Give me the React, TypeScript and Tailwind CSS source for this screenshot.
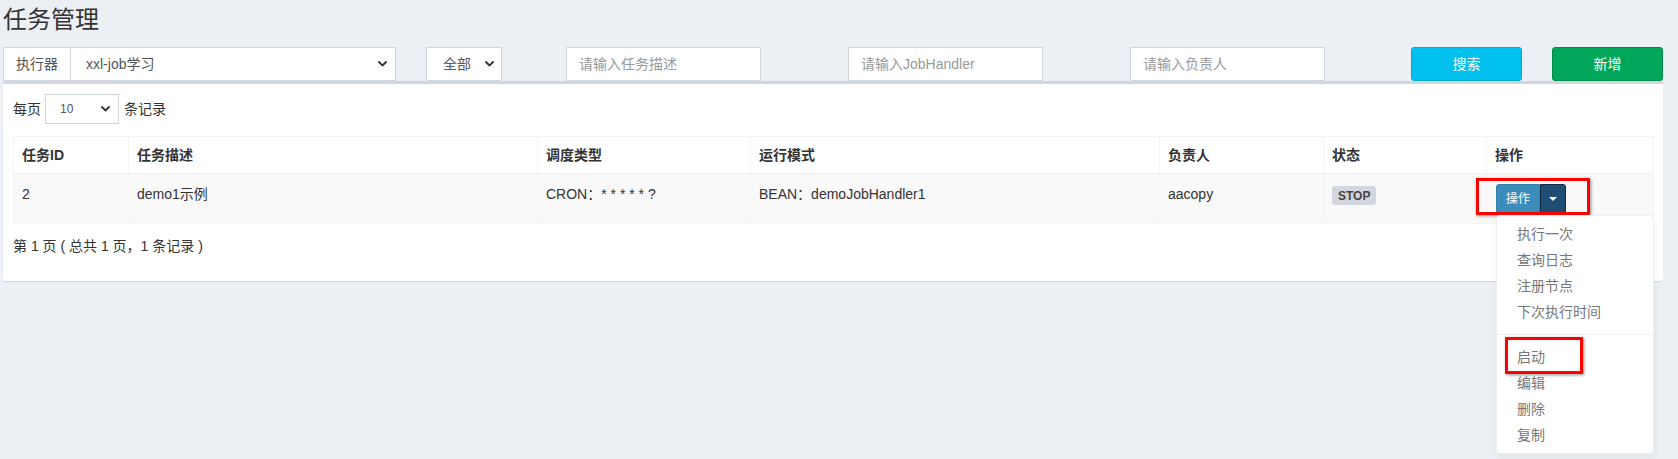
import React from "react";

const FONT = { fontFamily: '"Liberation Sans", "Noto Sans CJK SC", Arial, sans-serif' };

function Chevron({ className = "" }: { className?: string }) {
  return (
    <svg className={className} width="9" height="6" viewBox="0 0 9 6" fill="none">
      <path d="M1 1l3.5 3.5L8 1" stroke="#333" strokeWidth="1.8" strokeLinecap="round" strokeLinejoin="round" />
    </svg>
  );
}

const menuTop = ["执行一次", "查询日志", "注册节点", "下次执行时间"];
const menuBottom = ["启动", "编辑", "删除", "复制"];

const td = "border border-[#f4f4f4] px-[8px] py-[9px] align-top leading-[20px]";

export default function App() {
  return (
    <div className="w-[1678px] h-[459px] bg-[#ecf0f5] overflow-hidden text-[#333] text-[14px]" style={FONT}>
      <div className="pl-[3px] pt-[7px] w-[1663px]">
        <h1 className="text-[24px] leading-[26px] font-normal text-[#333]">任务管理</h1>

        {/* filter row */}
        <div className="mt-[14px] flex items-start h-[34px]">
          <div className="flex h-[34px]">
            <div className="w-[68px] h-[34px] border border-[#d2d6de] bg-white flex items-center justify-center text-[#555] text-[14px]">
              执行器
            </div>
            <div className="w-[325px] h-[34px] border border-l-0 border-[#d2d6de] bg-white flex items-center justify-between pl-[15px] pr-[8px] text-[#555]">
              <span>xxl-job学习</span>
              <Chevron />
            </div>
          </div>
          <div className="ml-[30px] w-[76px] h-[34px] border border-[#d2d6de] bg-white flex items-center justify-between pl-[16px] pr-[7px] text-[#555]">
            <span>全部</span>
            <Chevron />
          </div>
          <div className="ml-[64px] w-[195px] h-[34px] border border-[#d2d6de] bg-white flex items-center pl-[12px] text-[#999]">
            请输入任务描述
          </div>
          <div className="ml-[87px] w-[195px] h-[34px] border border-[#d2d6de] bg-white flex items-center pl-[12px] text-[#999]">
            请输入JobHandler
          </div>
          <div className="ml-[87px] w-[195px] h-[34px] border border-[#d2d6de] bg-white flex items-center pl-[12px] text-[#999]">
            请输入负责人
          </div>
          <div className="ml-[86px] w-[111px] h-[34px] rounded-[3px] border border-[#00acd6] bg-[#00c0ef] text-white flex items-center justify-center">
            搜索
          </div>
          <div className="ml-[30px] w-[111px] h-[34px] rounded-[3px] border border-[#008d4c] bg-[#00a65a] text-white flex items-center justify-center">
            新增
          </div>
        </div>

        {/* box */}
        <div className="w-[1660px] bg-white border-t-[3px] border-[#d2d6de] rounded-[3px] shadow-[0_1px_1px_rgba(0,0,0,0.1)]">
          <div className="px-[10px] pt-[10px] pb-[25px]">
            <div className="flex items-center h-[30px] text-[14px]">
              <span>每页</span>
              <div className="ml-[4px] w-[74px] h-[30px] border border-[#d2d6de] flex items-center justify-between pl-[14px] pr-[8px] text-[12px] text-[#555]">
                <span>10</span>
                <Chevron />
              </div>
              <span className="ml-[5px]">条记录</span>
            </div>

            <table className="mt-[12px] w-[1640px] table-fixed border-collapse border border-[#f4f4f4]">
              <colgroup>
                <col className="w-[115px]" />
                <col className="w-[409px]" />
                <col className="w-[213px]" />
                <col className="w-[409px]" />
                <col className="w-[164px]" />
                <col className="w-[163px]" />
                <col className="w-[167px]" />
              </colgroup>
              <thead>
                <tr className="border-b-2 border-[#f4f4f4]">
                  {["任务ID", "任务描述", "调度类型", "运行模式", "负责人", "状态", "操作"].map((h) => (
                    <th key={h} className="border border-[#f4f4f4] border-b-2 px-[8px] py-[8px] text-left font-bold leading-[20px] text-[14px]">
                      {h}
                    </th>
                  ))}
                </tr>
              </thead>
              <tbody>
                <tr className="bg-[#f9f9f9]">
                  <td className={td}>2</td>
                  <td className={td}>demo1示例</td>
                  <td className={td}>CRON：* * * * * ?</td>
                  <td className={td}>BEAN：demoJobHandler1</td>
                  <td className={td}>aacopy</td>
                  <td className={td}>
                    <span className="inline-flex items-center justify-center h-[19px] px-[6px] mt-[2px] rounded-[3px] bg-[#d2d6de] text-[#444] text-[12px] font-bold leading-none">
                      STOP
                    </span>
                  </td>
                  <td className="border border-[#f4f4f4] pl-[9px] pr-[8px] py-[9px] align-top">
                    <div className="relative inline-flex h-[30px]">
                      <div className="w-[44px] h-[30px] bg-[#3c8dbc] border border-[#367fa9] rounded-l-[3px] text-white text-[12px] flex items-center justify-center">
                        操作
                      </div>
                      <div className="w-[26px] h-[30px] bg-[#204d74] border border-[#122b40] rounded-r-[3px] flex items-center justify-center">
                        <span className="block w-0 h-0 border-l-[4px] border-r-[4px] border-t-[4px] border-l-transparent border-r-transparent border-t-white" />
                      </div>
                      <div className="absolute left-[-20px] top-[-6px] w-[114px] h-[37px] border-[3px] border-[#ff0000] shadow-[1px_1px_3px_rgba(0,0,0,0.45)] pointer-events-none" />
                      <div className="absolute left-0 top-[31px] w-[158px] bg-white border border-[#eeeeee] rounded-[4px] shadow-[0_3px_8px_rgba(0,0,0,0.06)] py-[5px] z-10">
                        {menuTop.map((m) => (
                          <div key={m} className="h-[26px] leading-[26px] pl-[20px] text-[14px] text-[#777] whitespace-nowrap">
                            {m}
                          </div>
                        ))}
                        <div className="my-[9px] h-px bg-[#eeeeee]" />
                        {menuBottom.map((m) => (
                          <div key={m} className="h-[26px] leading-[26px] pl-[20px] text-[14px] text-[#777] whitespace-nowrap">
                            {m}
                          </div>
                        ))}
                        <div className="absolute left-[8px] top-[121px] w-[78px] h-[37px] border-[3px] border-[#ff0000] shadow-[1px_1px_3px_rgba(0,0,0,0.45)] pointer-events-none" />
                      </div>
                    </div>
                  </td>
                </tr>
              </tbody>
            </table>

            <div className="mt-[12px] leading-[20px] text-[14px]">第 1 页 ( 总共 1 页，1 条记录 )</div>
          </div>
        </div>
      </div>
    </div>
  );
}
